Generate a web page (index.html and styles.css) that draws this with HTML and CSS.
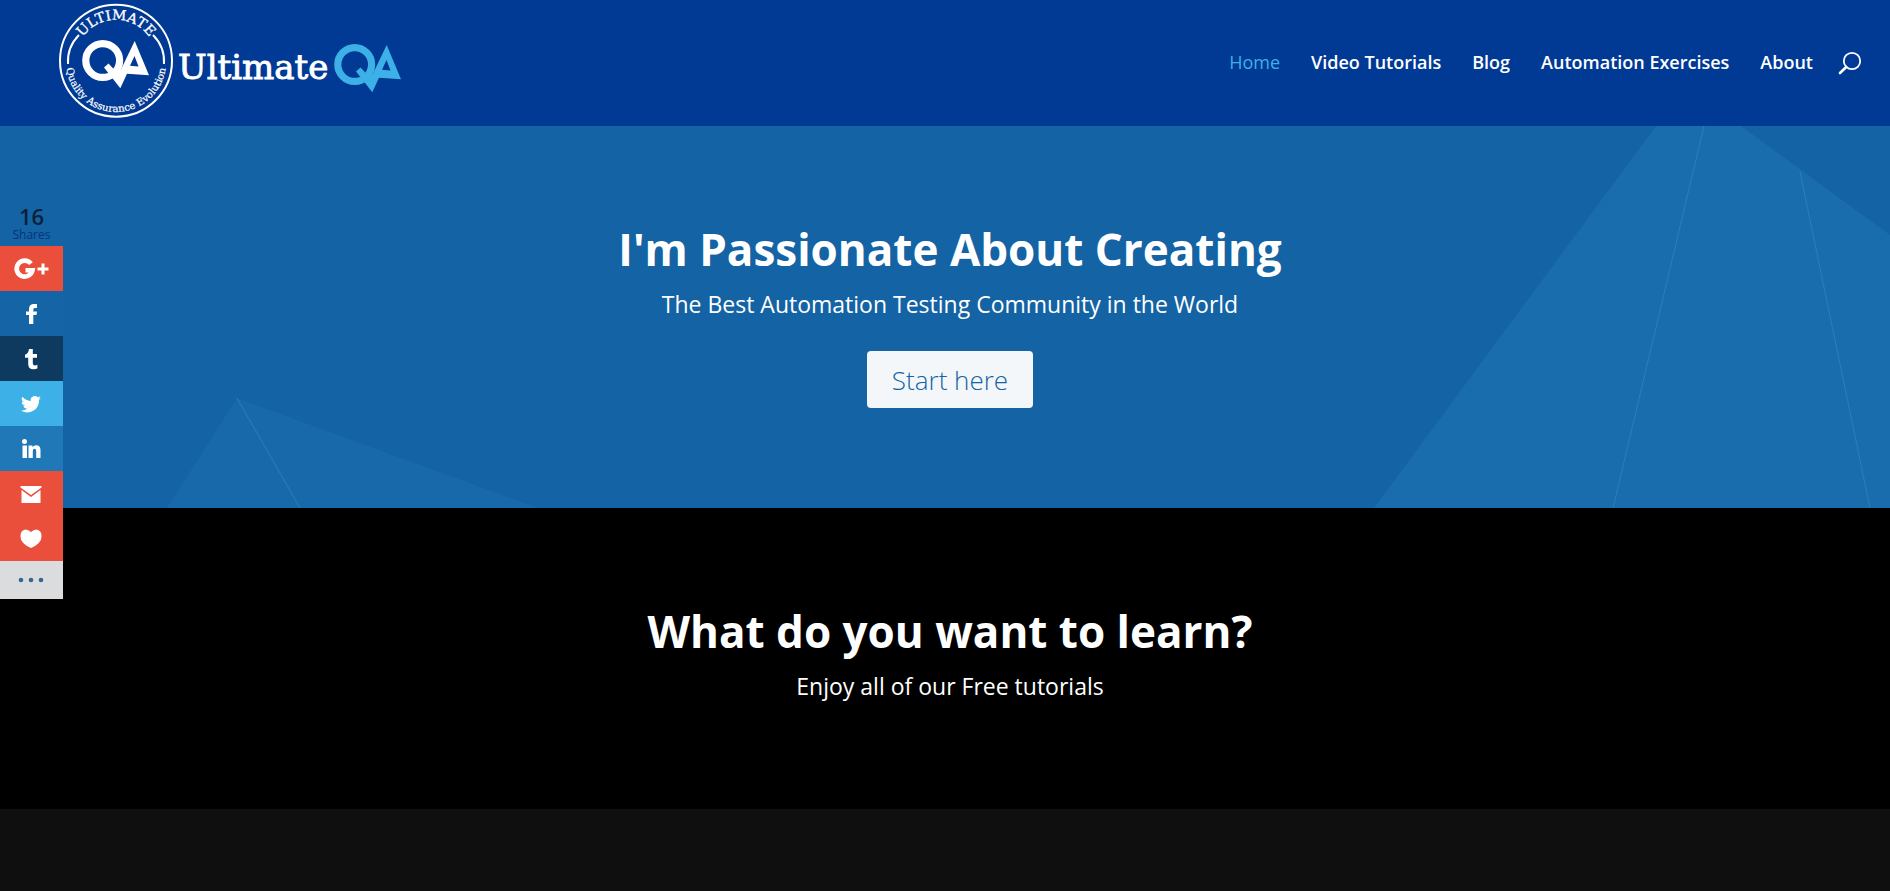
FILE: index.html
```html
<!DOCTYPE html>
<html lang="en">
<head>
<meta charset="utf-8">
<title>Ultimate QA</title>
<link rel="stylesheet" href="styles.css">
</head>
<body>
<header class="site-header">
  <a class="logo" href="#" aria-label="Ultimate QA">
    <svg width="360" height="126" viewBox="50 0 360 126">
      <defs>
        <path id="arc-top" d="M75 61a41 41 0 0 1 82 0"/>
        <path id="arc-bottom" d="M66 62a50 50 0 0 0 100 0"/>
        <g id="mark">
          <circle cx="29.7" cy="26.5" r="16.9" fill="none" stroke="currentColor" stroke-width="7.2"/>
          <path fill="currentColor" fill-rule="evenodd" d="M61.7 7L76 41.3L54 39.8L47.3 54.3L31 33.5L35.5 29.5L44 38.5L48 35.5ZM61.5 22L57 31.8L65.5 32.5Z"/>
        </g>
      </defs>
      <circle class="ring" cx="116" cy="60.7" r="56"/>
      <path class="ring" d="M68 64Q67 47 79 35M164 64Q165 47 153 35"/>
      <text class="badge-top"><textPath href="#arc-top" startOffset="50%">ULTIMATE</textPath></text>
      <text class="badge-bottom"><textPath href="#arc-bottom" startOffset="50%">Quality Assurance Evolution</textPath></text>
      <use class="mark-white" href="#mark" x="73" y="34"/>
      <text class="wordmark" x="178" y="79">Ultimate</text>
      <use class="mark-blue" href="#mark" x="325" y="38"/>
    </svg>
  </a>
  <nav class="menu">
    <a class="active" href="#">Home</a>
    <a href="#">Video Tutorials</a>
    <a href="#">Blog</a>
    <a href="#">Automation Exercises</a>
    <a href="#">About</a>
    <button class="search" type="button" aria-label="Search">
      <svg width="24" height="24" viewBox="0 0 24 24"><circle cx="14" cy="11" r="8.2" fill="none" stroke="#fff" stroke-width="1.8"/><path d="M8.200 17L2 23" stroke="#fff" stroke-width="2.600" stroke-linecap="round"/></svg>
    </button>
  </nav>
</header>

<main>
  <section class="hero">
    <svg class="facets" viewBox="0 0 1890 382" preserveAspectRatio="none" aria-hidden="true">
      <path fill="#1a6dac" d="M1656 0H1741L1890 109V382H1374Z"/>
      <path fill="#1869a9" d="M237 272L538 382H167Z"/>
      <path class="crease" d="M1704 0L1613 382M1800 46L1870 382M237 272L300 382"/>
    </svg>
    <div class="hero-text">
      <h1>I'm Passionate About Creating</h1>
      <p>The Best Automation Testing Community in the World</p>
      <a class="start" href="#">Start here</a>
    </div>
  </section>
  <section class="learn">
    <h2>What do you want to learn?</h2>
    <p>Enjoy all of our Free tutorials</p>
  </section>
  <section class="below"></section>
</main>

<aside class="share">
  <p class="count"><strong>16</strong><span>Shares</span></p>
  <a class="red" href="#" aria-label="Google Plus"><svg width="36" height="24" viewBox="0 0 36 24"><path fill="none" stroke="#fff" stroke-width="4.6" d="M17 6.700A8 8 0 1 0 18.5 13.300H11.500"/><path fill="none" stroke="#fff" stroke-width="3" d="M23.500 12H34.500M29 6.500V17.500"/></svg></a>
  <a class="facebook" href="#" aria-label="Facebook"><svg width="24" height="24" viewBox="0 0 24 24"><path fill="#fff" d="M17 2V6H14.8Q13.3 6 13.3 7.6V9.5H17L16.5 13H13.3V22H9V13H6V9.5H9V7Q9 2 14 2Z"/></svg></a>
  <a class="tumblr" href="#" aria-label="Tumblr"><svg width="24" height="24" viewBox="0 0 24 24"><path fill="#fff" d="M9 2H12.8V7H17V10.8H12.8V16.2Q12.8 18.4 15 18.4Q16.200 18.4 17.4 17.8V21.4Q15.8 22.2 13.4 22.2Q8.2 22.2 8.2 17.2V10.8H5V7.8Q8.5 6.6 9 2Z"/></svg></a>
  <a class="twitter" href="#" aria-label="Twitter"><svg width="24" height="24" viewBox="1 0 24 24"><path fill="#fff" d="M22 5.9a8 8 0 0 1-2.4.7 4 4 0 0 0 1.8-2.3 8 8 0 0 1-2.6 1 4.1 4.1 0 0 0-7 3.7A11.7 11.7 0 0 1 3.4 4.8a4.1 4.1 0 0 0 1.3 5.5 4 4 0 0 1-1.9-.5 4.1 4.1 0 0 0 3.3 4 4 4 0 0 1-1.8.1 4.1 4.1 0 0 0 3.8 2.8A8.2 8.2 0 0 1 2 18.4 11.6 11.6 0 0 0 20 8Z"/></svg></a>
  <a class="linkedin" href="#" aria-label="LinkedIn"><svg width="24" height="24" viewBox="1 0 24 24"><circle cx="5.5" cy="4.5" r="2.5" fill="#fff"/><path fill="#fff" d="M3.500 8.500H8V21H3.500ZM9.500 8.500H13.500V10.200Q14.800 8.200 17.200 8.200Q21.500 8.200 21.500 13V21H17.200V14Q17.200 11.700 15.600 11.700Q13.800 11.700 13.800 14V21H9.500Z"/></svg></a>
  <a class="red" href="#" aria-label="Email"><svg width="24" height="24" viewBox="1 0 24 24"><path fill="#fff" d="M1.5 4H22.5V5.5L12 13L1.5 5.5ZM2.5 8L12 15L21.5 8V21H2.5Z"/></svg></a>
  <a class="red" href="#" aria-label="Like"><svg width="24" height="24" viewBox="1 0 24 24"><path fill="#fff" d="M12 5Q14.5 2.500 17.500 2.500Q22.500 3 22.500 9.500Q22.500 16.500 12 21Q1.500 16.500 1.500 9.500Q1.500 3 6.500 2.500Q9.500 2.500 12 5Z"/></svg></a>
  <button class="more" type="button" aria-label="More"><svg width="26" height="6" viewBox="1 0 26 6"><g fill="#3c6490"><circle cx="3" cy="3" r="2.300"/><circle cx="13" cy="3" r="2.300"/><circle cx="23" cy="3" r="2.300"/></g></svg></button>
</aside>
</body>
</html>
```
FILE: styles.css
```css
* { box-sizing: border-box; }

body {
  margin: 0;
  min-height: 100vh;
  display: flex;
  flex-direction: column;
  background: #0f0f0f;
  color: #fff;
  font-family: "Open Sans", sans-serif;
}

a { color: inherit; text-decoration: none; }
button { border: 0; padding: 0; background: none; cursor: pointer; }
h1, h2, p { margin: 0; }
svg { display: block; overflow: visible; }

.site-header {
  display: flex;
  justify-content: space-between;
  align-items: center;
  padding: 0 28px 0 50px;
  background: #003a94;
}

.ring { fill: none; stroke: #fff; stroke-width: 2; }
.badge-top, .badge-bottom, .wordmark {
  fill: #fff;
  stroke: #fff;
  font-family: "DejaVu Serif", serif;
}
.badge-top { font-size: 14px; stroke-width: 0.3; text-anchor: middle; }
.badge-bottom { font-size: 10px; stroke-width: 0.2; text-anchor: middle; }
.wordmark { font-size: 34px; stroke-width: 0.9; }
.mark-white { color: #fff; }
.mark-blue { color: #3db0e8; }

.menu {
  display: flex;
  align-items: center;
  gap: 31px;
  padding-bottom: 2px;
  font-size: 18px;
  line-height: 24px;
  font-weight: 600;
}
.menu .active { color: #3db0e8; font-weight: 400; }
.search { margin-left: -6px; }

.hero {
  position: relative;
  padding: 93px 20px 100px 30px;
  background: #1463a5;
  text-align: center;
}
.facets {
  position: absolute;
  inset: 0;
  width: 100%;
  height: 100%;
}
.crease { fill: none; stroke: #2a7fbc; stroke-width: 1; }
.hero-text { position: relative; }

h1, h2 {
  font-size: 44px;
  line-height: 60px;
  font-weight: 700;
}
.hero p, .learn p {
  padding-top: 9px;
  font-size: 23px;
  line-height: 32px;
}
.start {
  display: inline-block;
  margin-top: 31px;
  padding: 11px 25px 9px;
  border-radius: 4px;
  background: #f4f7f9;
  color: #1463a5;
  font-size: 26px;
  line-height: 37px;
  font-weight: 300;
}

.learn {
  padding: 93px 20px 107px 30px;
  background: #000;
  text-align: center;
}
.below { flex: 1; background: #0f0f0f; }

.share {
  position: absolute;
  top: 204px;
  left: 0;
  width: 63px;
  display: flex;
  flex-direction: column;
}
.share a, .more {
  display: flex;
  align-items: center;
  justify-content: center;
  height: 45px;
}
.count {
  height: 42px;
  text-align: center;
  color: #0b2038;
}
.count strong, .count span { display: block; }
.count strong { font-size: 22px; line-height: 24px; font-weight: 600; }
.count span { font-size: 12px; line-height: 14px; color: #06337c; }
.share .red { background: #e94f3b; }
.share .facebook { background: #1565a6; }
.share .tumblr { background: #0f3a5f; }
.share .twitter { background: #3db0e8; }
.share .linkedin { background: #2078b7; }
.share .more { height: 38px; background: #dadcde; }
```
